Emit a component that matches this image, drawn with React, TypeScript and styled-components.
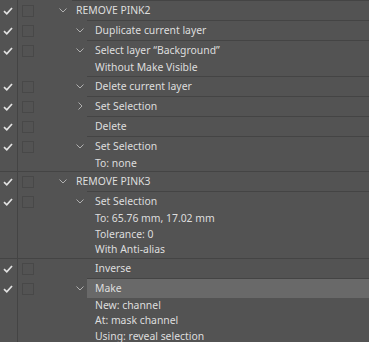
import React from "react";
import styled, { createGlobalStyle } from "styled-components";

const bg = "#535353";
const rule = "#444444";
const text = "#dedede";

const GlobalStyle = createGlobalStyle`
  html, body {
    margin: 0;
    padding: 0;
    background: ${bg};
    overflow: hidden;
  }
  body {
    font-family: "Noto Sans", "Liberation Sans", sans-serif;
    font-size: 10.4px;
    color: ${text};
  }
`;

const Panel = styled.div`
  width: 369px;
  height: 342px;
  overflow: hidden;
  background: ${bg};
  display: flex;
  flex-direction: column;
`;

const Row = styled.div<{ $full?: boolean }>`
  display: flex;
  align-items: stretch;
  box-shadow: ${(p) => (p.$full ? `inset 0 1px 0 ${rule}` : "none")};
`;

const CheckCell = styled.div`
  width: 18px;
  flex: none;
  border-right: 1px solid ${rule};
  display: flex;
  justify-content: center;
  padding-top: 7px;
  box-sizing: border-box;
  padding-right: 1px;
`;

const BoxCell = styled.div`
  width: 26px;
  flex: none;
  padding: 5px 0 0 4px;
  box-sizing: border-box;
`;

const Box = styled.div`
  width: 12px;
  height: 12px;
  box-sizing: border-box;
  border: 1px solid #484848;
`;

const Twisty = styled.div<{ $level: number }>`
  width: ${(p) => (p.$level === 0 ? 28 : 43)}px;
  flex: none;
  height: 20px;
  display: flex;
  align-items: center;
  justify-content: flex-end;
  padding-right: ${(p) => (p.$level === 0 ? 5 : 3)}px;
  box-sizing: border-box;
`;

const Chevron = styled.span`
  display: flex;
  width: 8px;
  justify-content: center;
  padding-top: 1px;
`;

const Body = styled.div`
  flex: 1;
  border-top: 1px solid ${rule};
  display: flex;
  flex-direction: column;
`;

const Title = styled.div<{ $level: number; $selected?: boolean }>`
  height: 19px;
  line-height: 19px;
  padding-left: ${(p) => (p.$level === 0 ? 4 : 8)}px;
  background: ${(p) => (p.$selected ? "#696969" : "transparent")};
  white-space: nowrap;
`;

const Detail = styled.div`
  height: 15.5px;
  line-height: 15px;
  padding-left: 8px;
  white-space: nowrap;
`;

const Check = () => (
  <svg width="10" height="8" viewBox="0 0 10 8">
    <path d="M1 4.2 L3.8 6.8 L9 1" fill="none" stroke="#e2e2e2" strokeWidth="1.7" />
  </svg>
);

const Down = () => (
  <svg width="8" height="5" viewBox="0 0 8 5">
    <path d="M0.5 0.5 L4 4 L7.5 0.5" fill="none" stroke="#b0b0b0" strokeWidth="1" />
  </svg>
);

const Right = () => (
  <svg width="5" height="8" viewBox="0 0 5 8">
    <path d="M0.5 0.5 L4 4 L0.5 7.5" fill="none" stroke="#b0b0b0" strokeWidth="1" />
  </svg>
);

interface Step {
  level: number;
  title: string;
  twisty?: "open" | "closed";
  details?: string[];
  selected?: boolean;
  full?: boolean;
}

const steps: Step[] = [
  { level: 0, title: "REMOVE PINK2", twisty: "open" },
  { level: 1, title: "Duplicate current layer", twisty: "open" },
  { level: 1, title: "Select layer \u201cBackground\u201d", twisty: "open", details: ["Without Make Visible"] },
  { level: 1, title: "Delete current layer", twisty: "open" },
  { level: 1, title: "Set Selection", twisty: "closed" },
  { level: 1, title: "Delete" },
  { level: 1, title: "Set Selection", twisty: "open", details: ["To: none"] },
  { level: 0, title: "REMOVE PINK3", twisty: "open", full: true },
  {
    level: 1,
    title: "Set Selection",
    twisty: "open",
    details: ["To: 65.76 mm, 17.02 mm", "Tolerance: 0", "With Anti-alias"],
  },
  { level: 1, title: "Inverse", full: true },
  {
    level: 1,
    title: "Make",
    twisty: "open",
    selected: true,
    details: ["New: channel", "At: mask channel", "Using: reveal selection"],
  },
];

export default function App() {
  return (
    <>
      <GlobalStyle />
      <Panel>
        {steps.map((s, i) => (
          <Row key={i} $full={s.full}>
            <CheckCell>
              <Check />
            </CheckCell>
            <BoxCell>
              <Box />
            </BoxCell>
            <Twisty $level={s.level}>
              {s.twisty && <Chevron>{s.twisty === "open" ? <Down /> : <Right />}</Chevron>}
            </Twisty>
            <Body>
              <Title $level={s.level} $selected={s.selected}>
                {s.title}
              </Title>
              {s.details?.map((d) => (
                <Detail key={d}>{d}</Detail>
              ))}
            </Body>
          </Row>
        ))}
      </Panel>
    </>
  );
}
